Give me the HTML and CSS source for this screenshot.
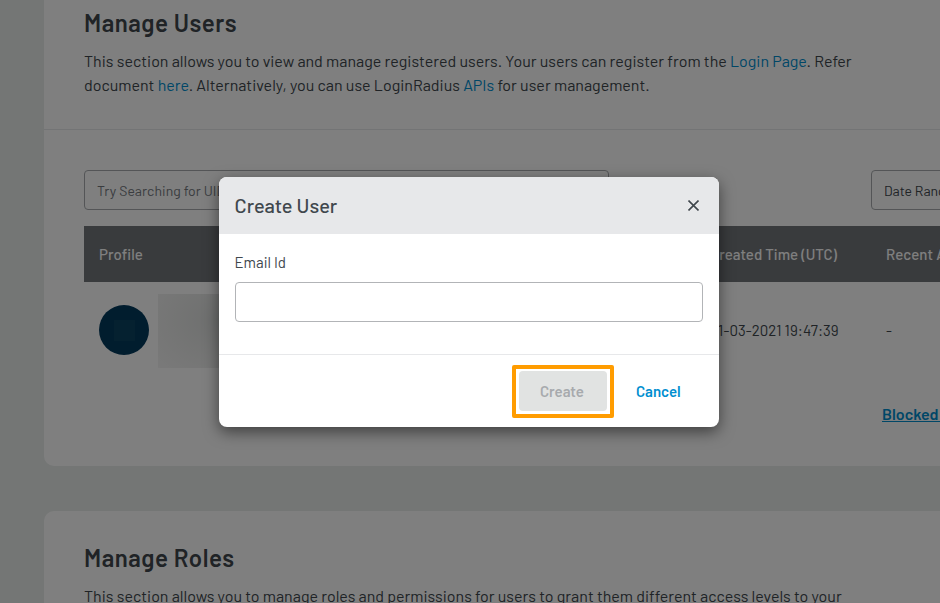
FILE: index.html
```html
<!DOCTYPE html>
<html lang="en">
<head>
<meta charset="utf-8">
<title>Manage Users</title>
<link rel="stylesheet" href="styles.css">
</head>
<body>
<main class="page">
  <section class="card users">
    <header class="card-head">
      <h1>Manage Users</h1>
      <p>This section allows you to view and manage registered users. Your users can register from the <a>Login Page</a>. Refer<br>document <a>here</a>. Alternatively, you can use LoginRadius <a>APIs</a> for user management.</p>
    </header>
    <div class="filters">
      <div class="field search">Try Searching for UID</div>
      <div class="field range">Date Range</div>
    </div>
    <div class="row head">
      <div class="profile">Profile</div>
      <div class="time">Created Time (UTC)</div>
      <div class="recent">Recent Activity</div>
    </div>
    <div class="row user">
      <div class="profile"><i class="avatar"></i><i class="redacted"></i></div>
      <div class="time stamp">01-03-2021 19:47:39</div>
      <div class="recent">-</div>
    </div>
    <div class="more"><a>Blocked Users</a></div>
  </section>
  <section class="card roles">
    <h1>Manage Roles</h1>
    <p>This section allows you to manage roles and permissions for users to grant them different access levels to your</p>
  </section>
</main>
<div class="overlay">
  <div class="modal">
    <header class="modal-head">
      <h2>Create User</h2>
      <svg width="11" height="11" viewBox="0 0 11 11"><path d="M.5.5l10 10M10.5.5l-10 10" fill="none" stroke="#40474d" stroke-width="1.6"/></svg>
    </header>
    <div class="modal-body">
      <label>Email Id</label>
      <div class="input"></div>
    </div>
    <footer>
      <div class="create">Create</div>
      <div class="cancel">Cancel</div>
    </footer>
  </div>
</div>
</body>
</html>
```
FILE: styles.css
```css
* { box-sizing: border-box; }
body { margin: 0; width: 940px; height: 603px; overflow: hidden; background: #e9edeb; color: #40474d; font: 400 15px/24px Barlow, Roboto, sans-serif; }
h1, h2, p { margin: 0; white-space: nowrap; }
a { color: #008ecf; }
.page { height: 603px; overflow: hidden; padding-left: 44px; }
.card { width: 1100px; background: #fff; }
.users { height: 466px; border-radius: 0 0 10px 10px; }
.card-head { height: 130px; padding: 7px 40px 0; border-bottom: 1px solid #e7e8ea; }
h1 { font-size: 24px; line-height: 32px; font-weight: 600; letter-spacing: .5px; }
.card p { margin-top: 10px; font-size: 16px; }
.filters { display: flex; justify-content: space-between; width: 1000px; padding: 40px 0 16px 40px; }
.field { height: 40px; border: 1px solid #a8abae; border-radius: 4px; padding: 0 12px; font-size: 14px; line-height: 40px; white-space: nowrap; }
.search { width: 525px; color: #74797e; letter-spacing: .05px; }
.range { width: 173px; }
.row { display: grid; grid-template-columns: 626px 176px 1fr; align-items: center; margin-left: 40px; white-space: nowrap; }
.head { height: 56px; background: #73767a; color: #fff; font-weight: 500; letter-spacing: .06px; }
.profile { display: flex; align-items: center; padding-left: 15px; }
.stamp { letter-spacing: .06px; }
.user { height: 96px; }
.avatar { width: 50px; height: 50px; border-radius: 50%; display: flex; align-items: center; justify-content: center; background: #033a5d; }
.avatar::before { content: ""; width: 21px; height: 21px; background: #0b4260; }
.redacted { width: 90px; height: 74px; margin: 2px 0 0 9px; background: radial-gradient(ellipse at 65% 35%, #dddfde, #e9eae9 50%, #f4f4f4); }
.more { padding: 24px 0 0 838px; font-size: 16px; font-weight: 600; white-space: nowrap; }
.more a { text-decoration: underline; }
.roles { height: 120px; margin-top: 45px; padding: 31px 40px 0; border-radius: 10px 10px 0 0; }
.overlay { position: absolute; inset: 0; background: rgba(0, 0, 0, .5); padding: 177px 0 0 219px; }
.modal { width: 500px; height: 250px; overflow: hidden; border-radius: 8px; background: #fff; box-shadow: 0 5px 15px rgba(0, 0, 0, .5); }
.modal-head { display: flex; justify-content: space-between; align-items: center; height: 57px; padding: 0 20px 0 15.5px; background: #e7e8ea; }
h2 { padding-bottom: 2px; font-size: 20px; line-height: 28px; font-weight: 500; }
.modal-body { height: 121px; padding: 16px 16px 0; border-bottom: 1px solid #e7e8ea; }
label { display: block; margin: 0 0 8px -.5px; }
.input { height: 40px; border: 1px solid #b2b4b7; border-radius: 4px; }
footer { display: flex; padding: 16px 0 0 300px; font-weight: 600; line-height: 41px; }
.create { position: relative; width: 88px; height: 40px; padding-left: 21px; border-radius: 4px; background: #e1e3e2; color: #a7aaad; }
.create::after { content: ""; position: absolute; inset: -6px -7px -7px; border: 4px solid #ff9c00; border-radius: 2px; }
.cancel { margin-left: 29px; color: #008ecf; }
```
